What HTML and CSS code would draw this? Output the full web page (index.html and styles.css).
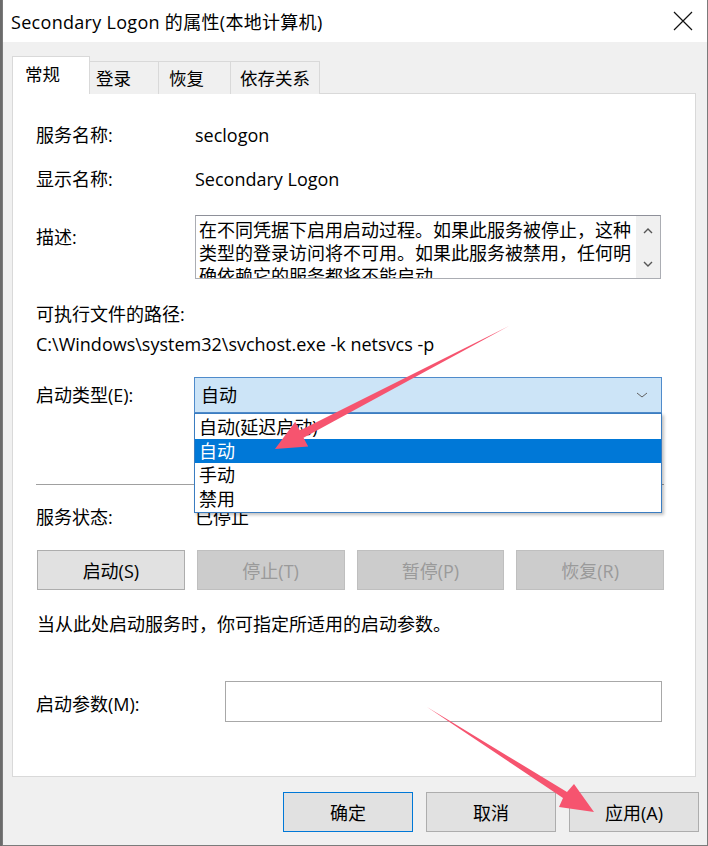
FILE: index.html
```html
<!DOCTYPE html>
<html lang="zh-CN">
<head>
    <meta charset="UTF-8">
    <title>Secondary Logon 的属性(本地计算机)</title>
    <link rel="stylesheet" href="styles.css">
</head>
<body>

<div class="window">
    <div class="titlebar">
        <span class="title">Secondary Logon 的属性(本地计算机)</span>
        <div class="close-btn">
            <svg width="20" height="20" viewBox="0 0 20 20">
                <path d="M1 1 L19 19 M19 1 L1 19" stroke="#111" stroke-width="1.2" fill="none"/>
            </svg>
        </div>
    </div>

    <div class="client">
        <div class="tabs">
            <div class="tab active">常规</div>
            <div class="tab tab-logon">登录</div>
            <div class="tab tab-recover">恢复</div>
            <div class="tab tab-deps">依存关系</div>
        </div>

        <div class="panel">
            <div class="row row-name">
                <span class="label">服务名称:</span>
                <span class="value">seclogon</span>
            </div>
            <div class="row row-display">
                <span class="label">显示名称:</span>
                <span class="value">Secondary Logon</span>
            </div>
            <div class="row row-desc">
                <span class="label desc-label">描述:</span>
                <div class="desc-box">
                    <div class="desc-text">在不同凭据下启用启动过程。如果此服务被停止，这种<br>类型的登录访问将不可用。如果此服务被禁用，任何明<br>确依赖它的服务都将不能启动。</div>
                    <div class="desc-scroll">
                        <svg width="12" height="8" viewBox="0 0 12 8"><path d="M2 6 L6 2 L10 6" stroke="#555" stroke-width="1.4" fill="none"/></svg>
                        <svg width="12" height="8" viewBox="0 0 12 8"><path d="M2 2 L6 6 L10 2" stroke="#555" stroke-width="1.4" fill="none"/></svg>
                    </div>
                </div>
            </div>
            <div class="path-title">可执行文件的路径:</div>
            <div class="path">C:\Windows\system32\svchost.exe -k netsvcs -p</div>

            <div class="row row-startup">
                <span class="label">启动类型(E):</span>
                <div class="combo-wrap">
                    <div class="combo">
                        <span>自动</span>
                        <svg width="12" height="8" viewBox="0 0 12 8"><path d="M1 2 L6 6 L11 2" stroke="#606060" stroke-width="1" fill="none"/></svg>
                    </div>
                    <ul class="combo-list">
                        <li>自动(延迟启动)</li>
                        <li class="selected">自动</li>
                        <li>手动</li>
                        <li>禁用</li>
                    </ul>
                </div>
            </div>

            <div class="separator"></div>

            <div class="row row-status">
                <span class="label">服务状态:</span>
                <span class="value">已停止</span>
            </div>

            <div class="service-buttons">
                <button class="btn">启动(S)</button>
                <button class="btn" disabled>停止(T)</button>
                <button class="btn" disabled>暂停(P)</button>
                <button class="btn" disabled>恢复(R)</button>
            </div>

            <div class="hint">当从此处启动服务时，你可指定所适用的启动参数。</div>

            <div class="row row-params">
                <span class="label params-label">启动参数(M):</span>
                <div class="params-input"></div>
            </div>
        </div>

        <div class="footer">
            <button class="btn btn-default">确定</button>
            <button class="btn">取消</button>
            <button class="btn">应用(A)</button>
        </div>
    </div>
</div>

<!-- annotation arrows drawn over the screenshot -->
<svg class="arrows" width="708" height="846" viewBox="0 0 708 846">
    <polygon points="509,326 303.5,437.7 308.2,446.5 275,449 295.2,421.7 299.9,430.5" fill="#f6546f"/>
    <polygon points="427,707 563,798 559,807 594,812 574,784 567,792" fill="#f6546f"/>
</svg>

</body>
</html>
```

FILE: styles.css
```css
body {
    margin: 0;
    width: 708px;
    height: 846px;
    position: relative;
    overflow: hidden;
    background: #6b6b6b;
    font-family: "Open Sans", "Noto Sans CJK SC", sans-serif;
    font-size: 18px;
    color: #000;
}
.window {
    margin-left: 2px;
    width: 704px;
    height: 845px;
    border: 1px solid #7b7b7b;
    border-top: none;
    display: flex;
    flex-direction: column;
    background: #f0f0f0;
}
.titlebar {
    height: 42px;
    background: #fff;
    display: flex;
    align-items: center;
    justify-content: space-between;
    padding-left: 8px;
}
.title {
    font-size: 18px;
    letter-spacing: 0.3px;
}
.close-btn {
    width: 48px;
    height: 42px;
    display: flex;
    align-items: center;
    justify-content: center;
}
.client {
    flex: 1;
    padding: 14px 11px 0 9px;
}
.tabs {
    display: flex;
    align-items: flex-end;
    height: 38px;
    margin-bottom: -1px;
    position: relative;
    z-index: 1;
}
.tab {
    height: 33px;
    box-sizing: border-box;
    border: 1px solid #d9d9d9;
    border-bottom: none;
    border-left: none;
    background: #f0f0f0;
    line-height: 33px;
    padding-left: 6px;
    font-size: 17.5px;
}
.tab.active {
    height: 38px;
    width: 78px;
    line-height: 34px;
    border-left: 1px solid #d9d9d9;
    background: #fff;
    padding-left: 12px;
}
.tab-logon { width: 69px; }
.tab-recover { width: 72px; padding-left: 10px; }
.tab-deps { width: 89px; padding-left: 9px; }
.panel {
    height: 684px;
    box-sizing: border-box;
    border: 1px solid #d9d9d9;
    background: #fff;
    padding: 30px 31px 0 23px;
    position: relative;
}
.row {
    display: flex;
    align-items: center;
    line-height: 23px;
}
.label {
    width: 159px;
    flex-shrink: 0;
}
.row-display {
    margin-top: 21px;
}
.row-desc {
    margin-top: 24px;
    align-items: flex-start;
}
.desc-label {
    margin-top: 11px;
}
.desc-box {
    width: 466px;
    height: 64px;
    box-sizing: border-box;
    border: 1px solid #abadb3;
    border-top-color: #8e9099;
    display: flex;
    overflow: hidden;
}
.desc-text {
    flex: 1;
    padding: 3px 0 0 3px;
    line-height: 23px;
    white-space: nowrap;
    overflow: hidden;
}
.desc-scroll {
    width: 24px;
    flex-shrink: 0;
    background: #f0f0f0;
    display: flex;
    flex-direction: column;
    align-items: center;
    justify-content: space-between;
    padding: 11px 0 10px;
    box-sizing: border-box;
}
.path-title {
    margin-top: 24px;
    line-height: 23px;
}
.path {
    margin-top: 7px;
    line-height: 23px;
}
.row-startup {
    margin-top: 21px;
}
.combo-wrap {
    position: relative;
    margin-left: -1px;
}
.combo {
    width: 468px;
    height: 36px;
    box-sizing: border-box;
    border: 1px solid #4f8bcb;
    background: #cce4f7;
    display: flex;
    align-items: center;
    justify-content: space-between;
    padding: 0 13px 0 6px;
}
.combo-list {
    position: absolute;
    top: 36px;
    left: 0;
    width: 468px;
    height: 100px;
    box-sizing: border-box;
    margin: 0;
    padding: 1px 0 0;
    list-style: none;
    background: #fff;
    border: 1px solid #3b7dc1;
    box-shadow: 2px 2px 3px rgba(0, 0, 0, 0.25);
    z-index: 2;
}
.combo-list li {
    height: 24px;
    line-height: 24px;
    padding-left: 4px;
}
.combo-list li.selected {
    background: #0078d7;
    color: #fff;
}
.separator {
    margin-top: 71px;
    height: 1px;
    background: #a0a0a0;
}
.row-status {
    margin-top: 21px;
}
.service-buttons {
    margin-top: 21px;
    display: grid;
    grid-template-columns: repeat(4, 1fr);
    gap: 12px;
    padding-left: 1px;
}
.btn {
    height: 40px;
    font-family: inherit;
    font-size: 18px;
    color: #000;
    background: #e1e1e1;
    border: 1px solid #adadad;
    padding: 0;
}
.btn:disabled {
    background: #cccccc;
    border-color: #bfbfbf;
    color: #9a9a9a;
}
.hint {
    margin-top: 23px;
    line-height: 23px;
    padding-left: 1px;
}
.row-params {
    margin-top: 45px;
}
.params-label {
    width: 189px;
    margin-top: 6px;
}
.params-input {
    width: 437px;
    height: 41px;
    box-sizing: border-box;
    border: 1px solid #a8a8a8;
}
.footer {
    display: flex;
    justify-content: flex-end;
    gap: 13px;
    padding: 15px 0 0;
    margin-right: -3px;
}
.footer .btn {
    width: 130px;
}
.footer .btn-default {
    border-color: #0078d7;
}
.arrows {
    position: absolute;
    top: 0;
    left: 0;
    pointer-events: none;
    z-index: 5;
}
```
